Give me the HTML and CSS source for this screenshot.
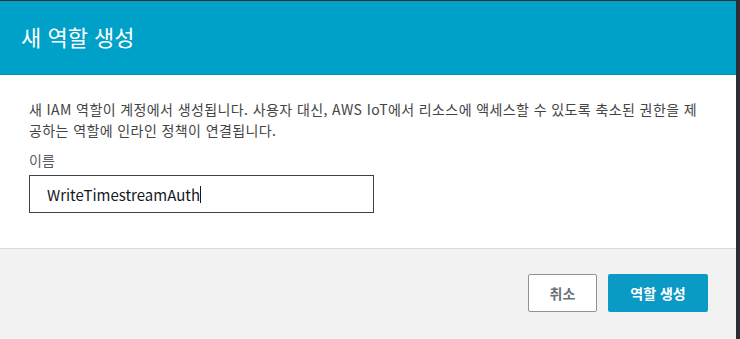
FILE: index.html
```html
<!DOCTYPE html>
<html lang="ko">
<head>
    <meta charset="UTF-8">
    <meta name="viewport" content="width=device-width, initial-scale=1.0">
    <title>새 역할 생성</title>
    <link rel="stylesheet" href="styles.css">
</head>
<body>
<div class="modal">
    <div class="modal-header">
        <h2>새 역할 생성</h2>
    </div>
    <div class="modal-body">
        <p class="description">새 IAM 역할이 계정에서 생성됩니다. 사용자 대신, AWS IoT에서 리소스에 액세스할 수 있도록 축소된 권한을 제공하는 역할에 인라인 정책이 연결됩니다.</p>
        <label class="field-label">이름</label>
        <div class="text-input">WriteTimestreamAuth<span class="caret"></span></div>
    </div>
    <div class="modal-footer">
        <button class="btn btn-cancel">취소</button>
        <button class="btn btn-primary">역할 생성</button>
    </div>
</div>
</body>
</html>
```

FILE: styles.css
```css
body {
    margin: 0;
    padding: 0;
    background: #2b2f33;
    font-family: "Noto Sans CJK KR", "Noto Sans", sans-serif;
    height: 100vh;
    overflow: hidden;
}
.modal {
    width: 736px;
    margin-top: 1px;
    background: #fff;
    height: 100%;
    display: flex;
    flex-direction: column;
}
.modal-header {
    background: #00a1c9;
    height: 74px;
    display: flex;
    align-items: center;
    padding: 0 21px;
    border-bottom: 1px solid #0091b6;
    box-sizing: border-box;
}
.modal-header h2 {
    margin: 0;
    color: #fff;
    font-size: 22px;
    font-weight: 400;
    margin-top: -4px;
}
.modal-body {
    padding: 24px 29px 35px;
    border-bottom: 1px solid #d5dbdb;
}
.description {
    margin: 0 0 9px;
    font-size: 14px;
    line-height: 21px;
    letter-spacing: 0.4px;
    color: #444;
    padding-right: 4px;
}
.field-label {
    display: block;
    font-size: 14px;
    line-height: 20px;
    color: #545b64;
    margin-bottom: 5px;
}
.text-input {
    width: 345px;
    height: 38px;
    box-sizing: border-box;
    border: 1px solid #3d4349;
    padding: 0 17px;
    display: flex;
    align-items: center;
    font-size: 15px;
    color: #16191f;
}
.caret {
    display: inline-block;
    width: 1px;
    height: 17px;
    background: #16191f;
}
.modal-footer {
    flex: 1;
    background: #f2f2f2;
    display: flex;
    justify-content: flex-end;
    align-items: flex-start;
    gap: 11px;
    padding: 25px 28px 0 0;
}
.btn {
    height: 38px;
    font-family: inherit;
    font-size: 14px;
    font-weight: 700;
    border-radius: 2px;
    cursor: pointer;
}
.btn-cancel {
    width: 69px;
    background: #fff;
    color: #6b7177;
    border: 1px solid #8d9397;
}
.btn-primary {
    width: 100px;
    background: #0a9ac5;
    color: #fff;
    border: none;
}
```
